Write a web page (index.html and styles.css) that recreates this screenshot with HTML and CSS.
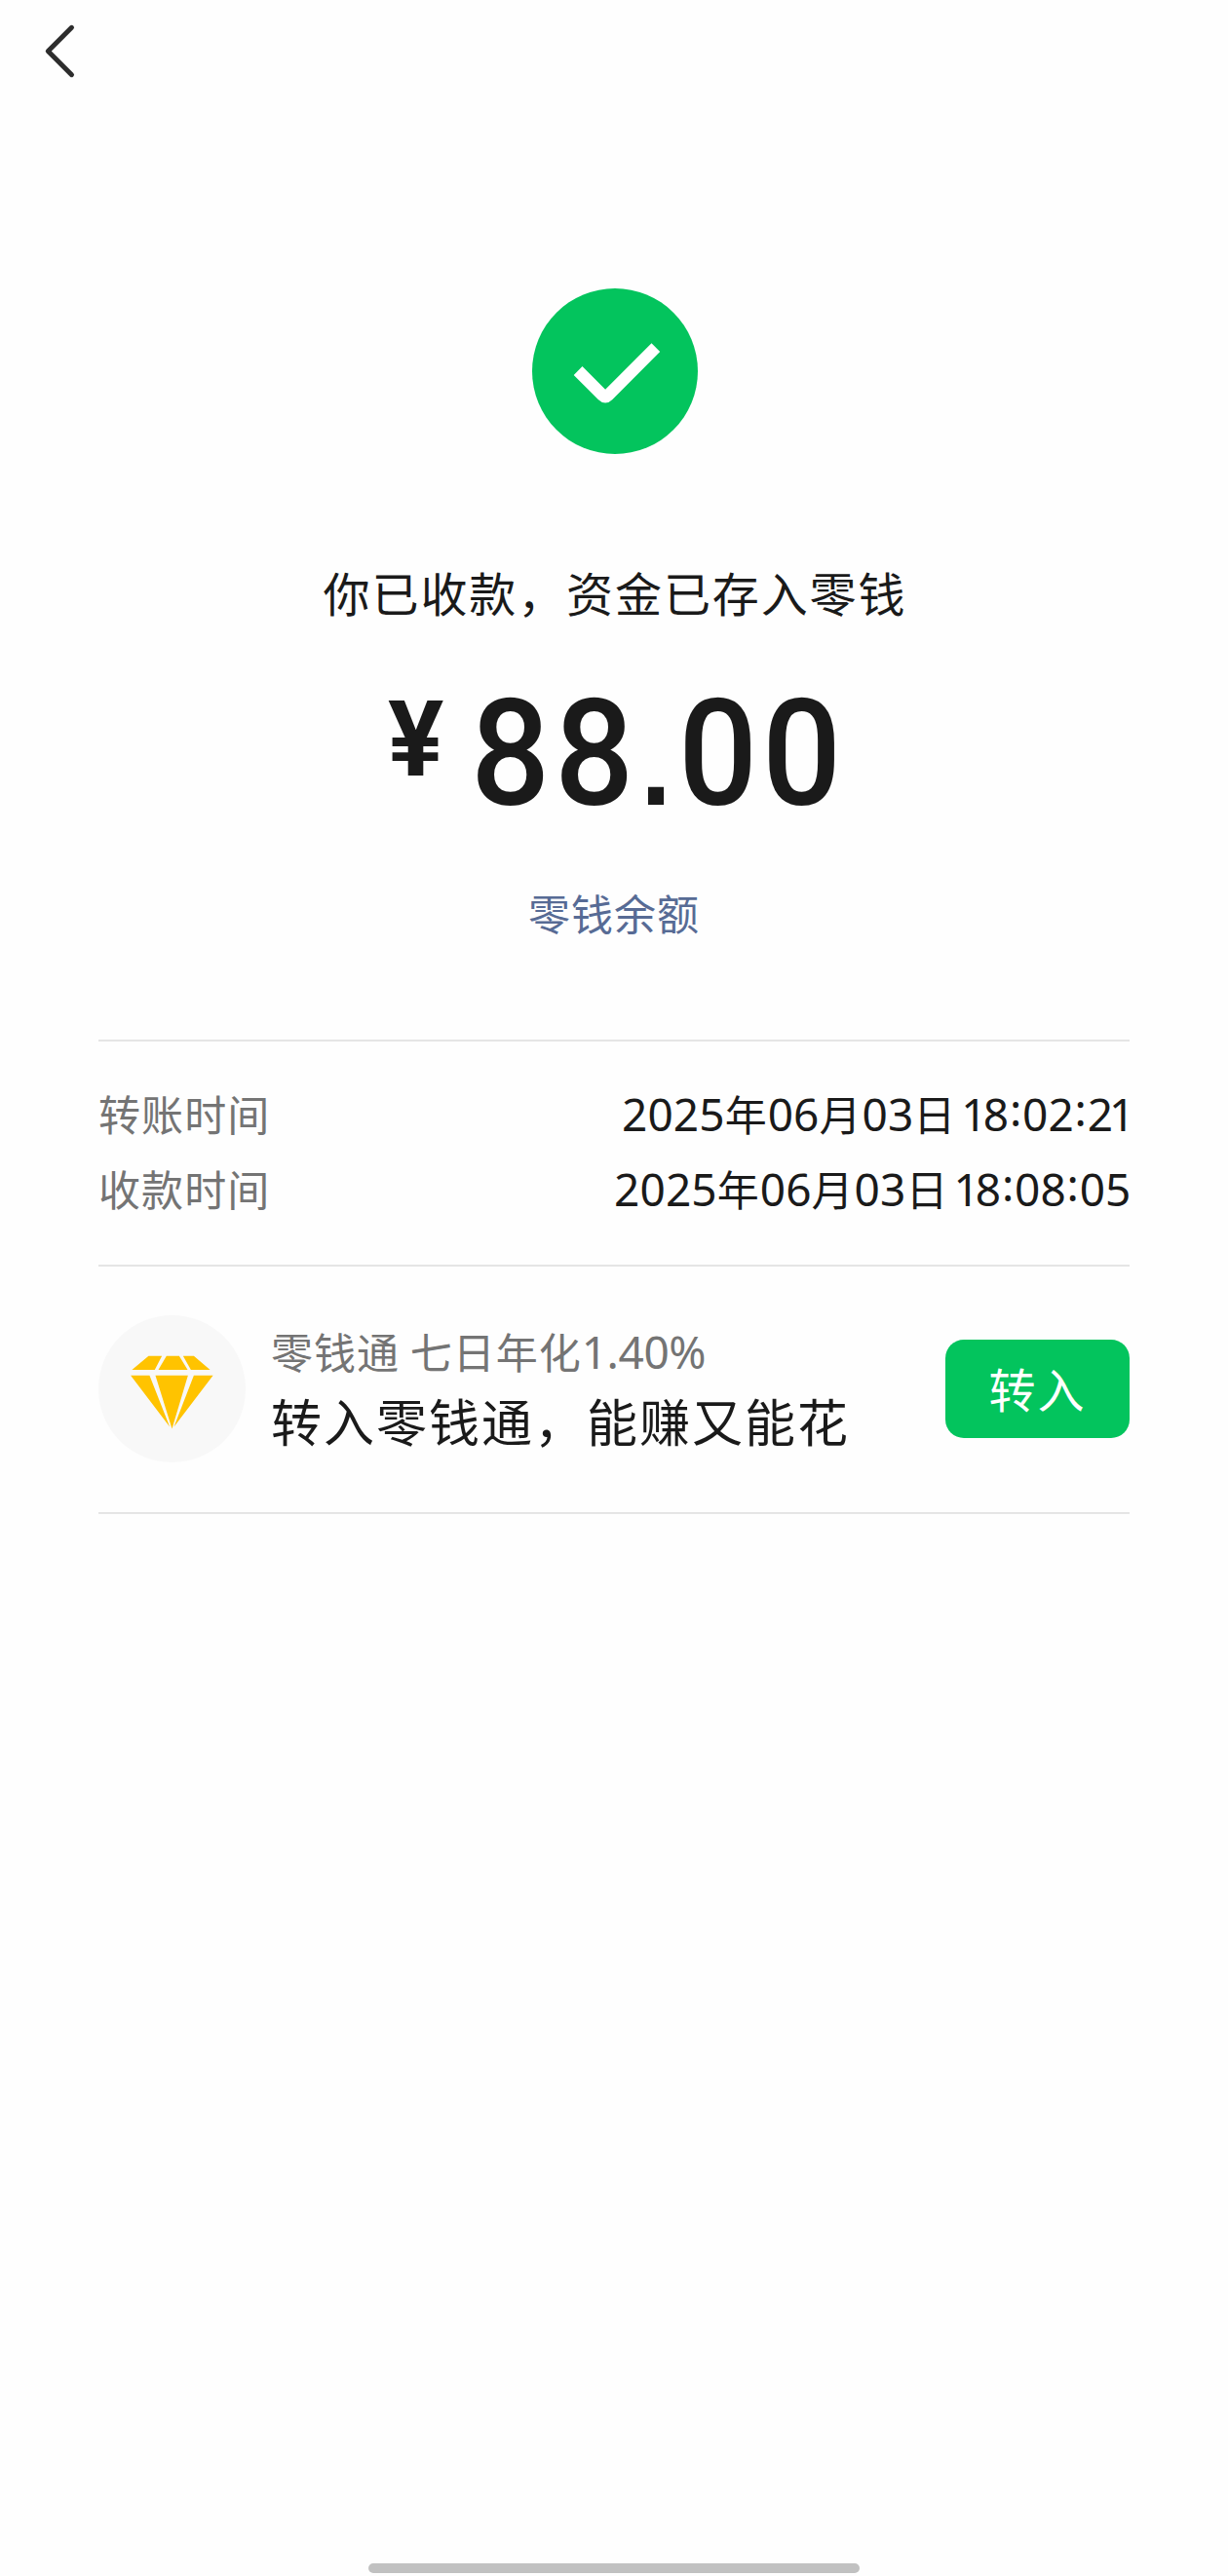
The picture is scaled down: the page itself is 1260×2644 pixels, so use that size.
FILE: index.html
```html
<!DOCTYPE html>
<html lang="zh-CN">
<head>
<meta charset="utf-8">
<title>零钱收款</title>
<link rel="stylesheet" href="styles.css">
</head>
<body>
<div class="screen">
  <header class="nav">
    <svg class="back" viewBox="0 0 36 60" aria-label="返回"><path d="M29.5 4.3 5.3 28.5l24.2 24.2"/></svg>
  </header>
  <main class="content">
    <section class="result">
      <svg class="success" viewBox="0 0 170 170">
        <circle cx="85" cy="85" r="85"/>
        <path d="M51.5 80.1 75.1 103.7 122.5 56.3 131.2 65 82.2 114.2Q75.1 121 68 114.2L42.7 88.9Z"/>
      </svg>
      <h1 class="headline">你已收款，资金已存入零钱</h1>
      <div class="amount"><span class="yen">¥</span><span class="number">88<span class="dot">.</span>00</span></div>
      <a class="balance">零钱余额</a>
    </section>
    <dl class="details">
      <div class="row"><dt>转账时间</dt><dd>2025<span class="han">年</span>06<span class="han">月</span>03<span class="han">日</span><span class="time"><span class="one">1</span>8<i>:</i>02<i>:</i>2<span class="one-last">1</span></span></dd></div>
      <div class="row"><dt>收款时间</dt><dd>2025<span class="han">年</span>06<span class="han">月</span>03<span class="han">日</span><span class="time"><span class="one">1</span>8<i>:</i>08<i>:</i>05</span></dd></div>
    </dl>
    <section class="promo">
      <svg class="gem" viewBox="0 0 452 452">
        <circle cx="226" cy="226" r="226"/>
        <path d="M154 125H195L173 168H103ZM209 125H248L274 168H184ZM260 125H293L343 168H284ZM99 185H157L219 343ZM175 185H275L226 349ZM293 185H352L232 343Z"/>
      </svg>
      <div class="promo-text">
        <p class="rate">零钱通 七日年化<span class="percent">1.40%</span></p>
        <p class="slogan">转入零钱通，能赚又能花</p>
      </div>
      <button class="transfer">转入</button>
    </section>
  </main>
  <div class="home-bar"></div>
</div>
</body>
</html>
```
FILE: styles.css
```css
* { box-sizing: border-box; margin: 0; padding: 0; }
body {
  background: #fefefe;
  color: #1a1a1a;
  font-family: "Noto Sans CJK SC", sans-serif;
}
.screen { height: 2644px; display: flex; flex-direction: column; }
.nav { height: 296px; padding: 24px 0 0 44px; }
.back { display: block; width: 36px; height: 60px; fill: none; stroke: #2d2d2d; stroke-width: 5; stroke-linecap: round; stroke-linejoin: round; }
.content { flex: 1; padding: 0 101px; }
.result { display: flex; flex-direction: column; align-items: center; height: 771px; }
.success { width: 170px; height: 170px; flex: none; margin-left: 2px; }
.success circle { fill: #03c45d; }
.success path { fill: #fff; }
.headline { margin-top: 111px; padding-left: 2px; font-size: 48px; font-weight: 400; line-height: 60px; letter-spacing: 1.9px; white-space: nowrap; }
.amount { margin-top: 77px; width: 464px; display: flex; align-items: flex-start; height: 120px; font-family: Roboto, sans-serif; font-weight: 500; white-space: nowrap; }
.yen { flex: 0 0 85px; font-size: 107px; line-height: 92px; font-weight: 700; }
.number { font-size: 153px; line-height: 120px; letter-spacing: 5px; transform: scaleX(.935); transform-origin: left; }
.dot { margin: 0 2.5px; font-family: "Liberation Sans", sans-serif; font-size: 122px; font-weight: 700; line-height: 1; }
.balance { margin-top: 72px; font-size: 43px; line-height: 60px; letter-spacing: 1px; color: #576b95; }
.details { border-top: 2px solid #e5e5e5; border-bottom: 2px solid #e5e5e5; padding: 35px 0 40px; height: 233px; }
.row { display: flex; justify-content: space-between; align-items: baseline; height: 77px; line-height: 77px; white-space: nowrap; }
.row dt { font-size: 43px; letter-spacing: 1.1px; color: #747474; }
.row dd { margin-right: -1.5px; font-family: "Noto Sans", sans-serif; font-size: 46px; letter-spacing: .1px; }
.han { font-family: "Noto Sans CJK SC", sans-serif; font-size: 43px; letter-spacing: 1px; line-height: 1; }
.time { margin-left: 5px; }
.time i { font-style: normal; position: relative; top: -5px; margin: 0 .7px; }
.one { margin-right: -4px; }
.one-last { margin: 0 -4px; }
.promo { display: flex; align-items: flex-start; height: 254px; padding-top: 50px; border-bottom: 2px solid #e5e5e5; }
.gem { width: 151px; height: 151px; flex: none; }
.gem circle { fill: #f8f8f8; }
.gem path { fill: #ffc300; }
.promo-text { flex: 1; margin: 6px 0 0 26px; white-space: nowrap; }
.rate { height: 60px; font-size: 43px; line-height: 60px; letter-spacing: 1px; color: #747474; }
.percent { font-family: "Noto Sans", sans-serif; font-size: 46px; letter-spacing: -.4px; line-height: 1; }
.slogan { margin-top: 2px; font-size: 52px; line-height: 79px; letter-spacing: 2px; }
.transfer { margin-top: 25px; width: 189px; height: 101px; border: 0; border-radius: 19px; background: #03c45d; color: #fff; font: 48px/96px "Noto Sans CJK SC", sans-serif; letter-spacing: 2px; padding-bottom: 3px; }
.home-bar { width: 504px; height: 10px; margin: 0 auto 3px; border-radius: 5px; background: #c1c1c1; }
```
